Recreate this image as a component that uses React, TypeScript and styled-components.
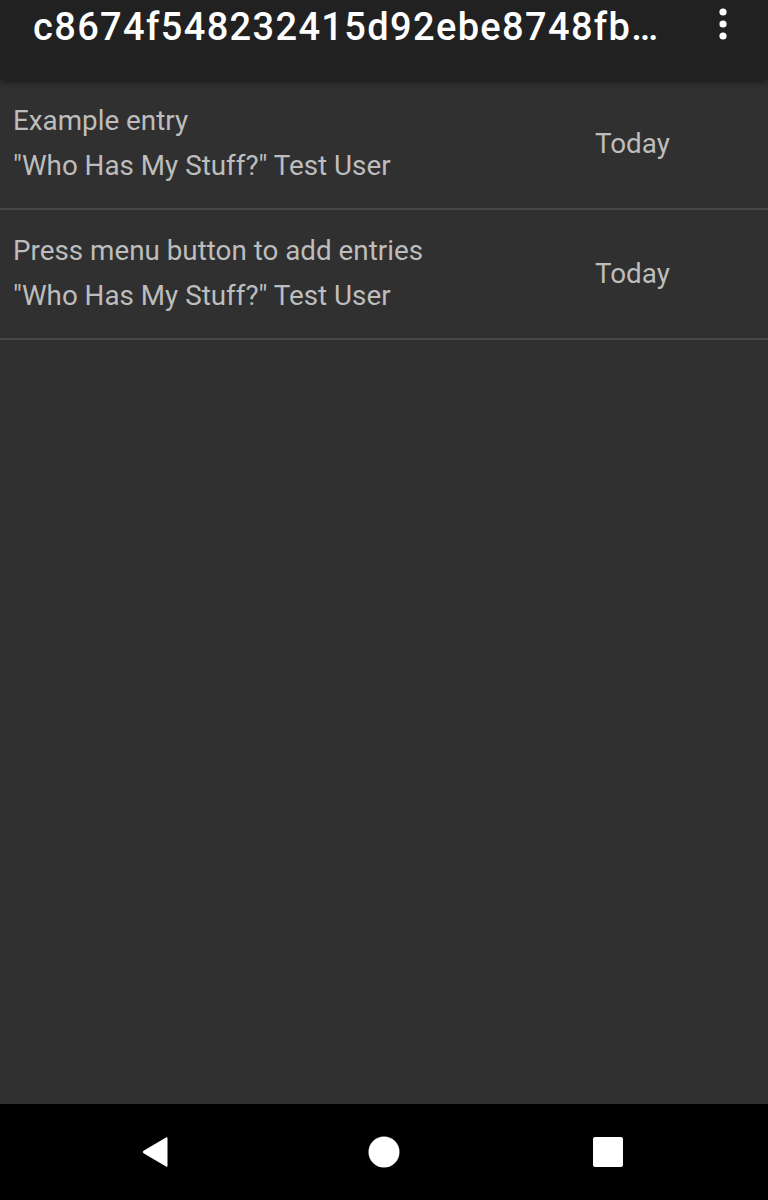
import React from 'react';
import styled, { createGlobalStyle } from 'styled-components';

const GlobalStyle = createGlobalStyle`
  html, body {
    margin: 0;
    padding: 0;
    background: #303030;
  }
  body {
    font-family: Roboto, "Noto Sans", sans-serif;
  }
`;

interface Entry {
  id: string;
  description: string;
  owner: string;
  date: string;
}

const ENTRIES: Entry[] = [
  {
    id: '1',
    description: 'Example entry',
    owner: '"Who Has My Stuff?" Test User',
    date: 'Today',
  },
  {
    id: '2',
    description: 'Press menu button to add entries',
    owner: '"Who Has My Stuff?" Test User',
    date: 'Today',
  },
];

function App() {
  return (
    <Screen>
      <GlobalStyle />
      <AppBar>
        <Title>c8674f548232415d92ebe8748fb…</Title>
        <OverflowButton aria-label="More options">
          <svg width="8" height="32" viewBox="0 0 8 32">
            <circle cx="4" cy="4" r="3.6" fill="#fff" />
            <circle cx="4" cy="16" r="3.6" fill="#fff" />
            <circle cx="4" cy="28" r="3.6" fill="#fff" />
          </svg>
        </OverflowButton>
      </AppBar>
      <EntryList>
        {ENTRIES.map(entry => (
          <Row key={entry.id}>
            <Lines>
              <Line>{entry.description}</Line>
              <Line>{entry.owner}</Line>
            </Lines>
            <DateLabel>{entry.date}</DateLabel>
          </Row>
        ))}
      </EntryList>
      <NavBar>
        <NavButton aria-label="Back">
          <svg width="28" height="34" viewBox="0 0 28 34">
            <path
              d="M25 2.5 Q26.5 1.8 26.5 3.5 L26.5 30.5 Q26.5 32.2 25 31.5 L2.5 18.3 Q1 17 2.5 15.7 Z"
              fill="#fff"
            />
          </svg>
        </NavButton>
        <NavButton aria-label="Home">
          <svg width="32" height="32" viewBox="0 0 32 32">
            <circle cx="16" cy="16" r="15.5" fill="#fff" />
          </svg>
        </NavButton>
        <NavButton aria-label="Overview">
          <svg width="30" height="30" viewBox="0 0 30 30">
            <rect x="0" y="0" width="30" height="30" rx="2" fill="#fff" />
          </svg>
        </NavButton>
      </NavBar>
    </Screen>
  );
}

const Screen = styled.div`
  display: flex;
  flex-direction: column;
  height: 1200px;
  background: #303030;
  overflow: hidden;
`;

const AppBar = styled.header`
  position: relative;
  z-index: 1;
  display: flex;
  align-items: flex-start;
  justify-content: space-between;
  height: 80px;
  padding: 0 28px 0 33px;
  background: #212121;
  box-shadow: 0 2px 6px rgba(0, 0, 0, 0.45);
  box-sizing: border-box;
`;

const Title = styled.h1`
  margin: 0;
  padding-top: 3px;
  color: #fff;
  font-size: 38px;
  font-weight: 500;
  letter-spacing: 1.35px;
  line-height: 48px;
  white-space: nowrap;
`;

const OverflowButton = styled.div`
  display: flex;
  padding-top: 8px;
  margin-right: 13px;
`;

const EntryList = styled.ul`
  flex: 1;
  margin: 0;
  padding: 0;
  list-style: none;
`;

const Row = styled.li`
  display: flex;
  align-items: center;
  padding: 18px 0 20px 13px;
  border-bottom: 2px solid #474747;
`;

const Lines = styled.div`
  display: flex;
  flex-direction: column;
  flex: 1;
`;

const Line = styled.span`
  color: #bdbdbd;
  font-size: 27.8px;
  line-height: 45px;
  white-space: nowrap;
`;

const DateLabel = styled.span`
  width: 173px;
  color: #bdbdbd;
  font-size: 27.8px;
  line-height: 45px;
`;

const NavBar = styled.nav`
  display: grid;
  grid-template-columns: 310px 148px 300px;
  align-items: center;
  justify-items: center;
  height: 96px;
  background: #000;
  box-sizing: border-box;
`;

const NavButton = styled.div`
  display: flex;
  align-items: center;
  justify-content: center;
`;

export default App;
